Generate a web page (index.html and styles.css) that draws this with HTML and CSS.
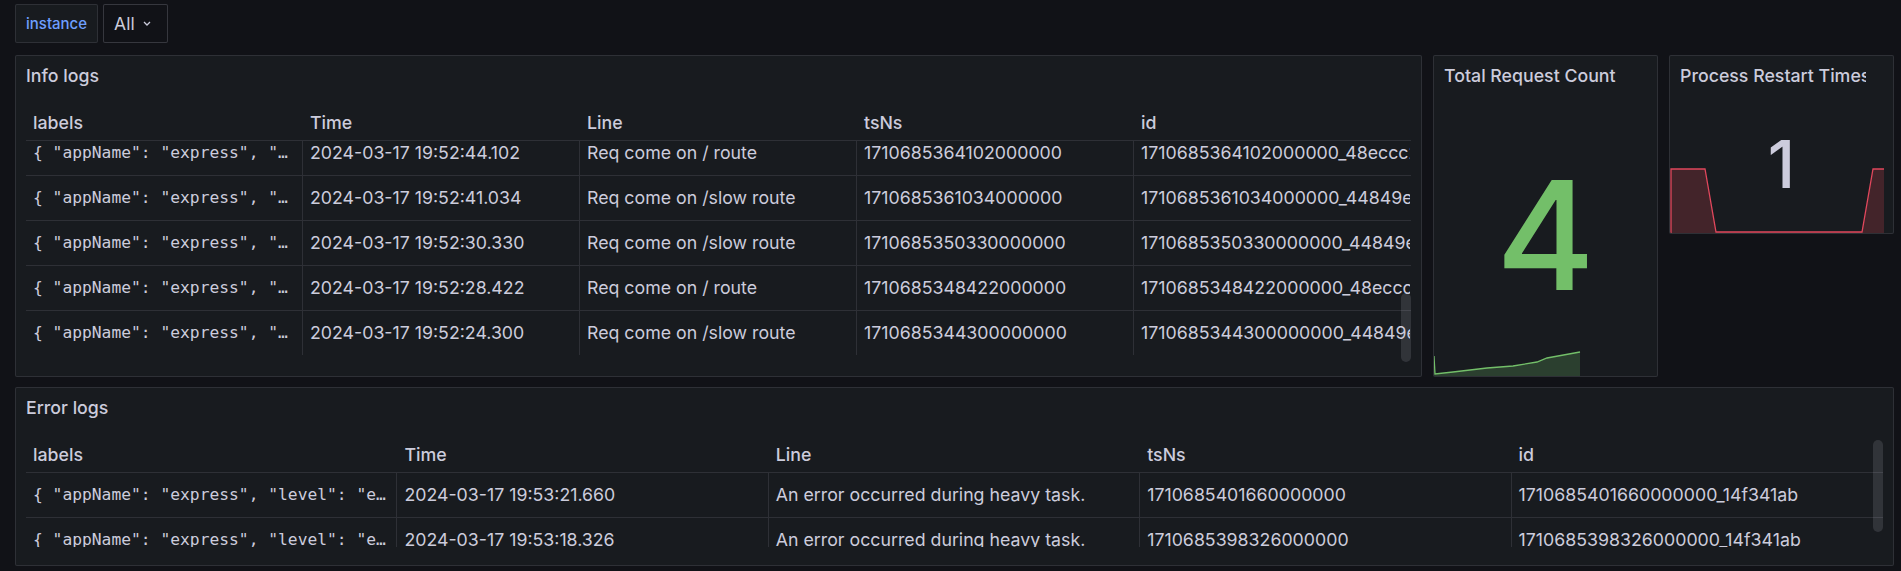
FILE: index.html
```html
<!DOCTYPE html>
<html lang="en">
<head>
<meta charset="utf-8">
<title>Dashboard</title>
<link rel="stylesheet" href="styles.css">
</head>
<body>
<div class="dashboard">
  <div class="vars">
    <label class="var-label">instance</label>
    <button class="var-select"><span>All</span>
      <svg class="chevron" width="8" height="5" viewBox="0 0 8 5"><path d="M1 1l3 3 3-3" /></svg>
    </button>
  </div>

  <div class="grid">
    <section class="panel panel--info">
      <header class="panel-header"><h2 class="panel-title">Info logs</h2></header>
      <div class="panel-body">
        <div class="table">
          <div class="table-row table-head">
            <div class="cell">labels</div><div class="cell">Time</div><div class="cell">Line</div><div class="cell">tsNs</div><div class="cell">id</div>
          </div>
          <div class="table-body">
            <div class="rows rows--scrolled">
              <div class="table-row">
                <div class="cell cell--json">{ "appName": "express", "level": "info", "service_name": "express" }</div>
                <div class="cell">2024-03-17 19:52:44.102</div>
                <div class="cell">Req come on / route</div>
                <div class="cell">1710685364102000000</div>
                <div class="cell">1710685364102000000_48eccc2d</div>
              </div>
              <div class="table-row">
                <div class="cell cell--json">{ "appName": "express", "level": "info", "service_name": "express" }</div>
                <div class="cell">2024-03-17 19:52:41.034</div>
                <div class="cell">Req come on /slow route</div>
                <div class="cell">1710685361034000000</div>
                <div class="cell">1710685361034000000_44849ea1</div>
              </div>
              <div class="table-row">
                <div class="cell cell--json">{ "appName": "express", "level": "info", "service_name": "express" }</div>
                <div class="cell">2024-03-17 19:52:30.330</div>
                <div class="cell">Req come on /slow route</div>
                <div class="cell">1710685350330000000</div>
                <div class="cell">1710685350330000000_44849ea1</div>
              </div>
              <div class="table-row">
                <div class="cell cell--json">{ "appName": "express", "level": "info", "service_name": "express" }</div>
                <div class="cell">2024-03-17 19:52:28.422</div>
                <div class="cell">Req come on / route</div>
                <div class="cell">1710685348422000000</div>
                <div class="cell">1710685348422000000_48eccc2d</div>
              </div>
              <div class="table-row">
                <div class="cell cell--json">{ "appName": "express", "level": "info", "service_name": "express" }</div>
                <div class="cell">2024-03-17 19:52:24.300</div>
                <div class="cell">Req come on /slow route</div>
                <div class="cell">1710685344300000000</div>
                <div class="cell">1710685344300000000_44849ea1</div>
              </div>
            </div>
          </div>
          <div class="scroll-thumb scroll-thumb--info"></div>
        </div>
      </div>
    </section>

    <section class="panel panel--stat">
      <header class="panel-header"><h2 class="panel-title">Total Request Count</h2></header>
      <div class="stat-body">
        <div class="stat-value stat-value--green">4</div>
      </div>
      <svg class="sparkline sparkline--green" width="223" height="30" viewBox="0 0 223 30">
        <polygon class="spark-fill" points="0,10 1,28 19,26 53,22 79,20 103,16 113,12 146,6 146,30 0,30" />
        <polyline class="spark-line" points="0,10 1,28 19,26 53,22 79,20 103,16 113,12 146,6" />
      </svg>
    </section>

    <section class="panel panel--stat panel--short">
      <header class="panel-header"><h2 class="panel-title">Process Restart Times</h2></header>
      <div class="stat-body">
        <div class="stat-value stat-value--text">1</div>
      </div>
      <svg class="sparkline sparkline--red" width="223" height="66" viewBox="0 0 223 66">
        <polygon class="spark-fill" points="1,2 35,2 46,65 192,65 203,2 214,2 214,66 1,66" />
        <polyline class="spark-line" points="1,66 1,2 35,2 46,65 192,65 203,2 214,2" />
      </svg>
    </section>

    <section class="panel panel--error">
      <header class="panel-header"><h2 class="panel-title">Error logs</h2></header>
      <div class="panel-body">
        <div class="table">
          <div class="table-row table-head">
            <div class="cell">labels</div><div class="cell">Time</div><div class="cell">Line</div><div class="cell">tsNs</div><div class="cell">id</div>
          </div>
          <div class="table-body table-body--short">
            <div class="rows">
              <div class="table-row">
                <div class="cell cell--json">{ "appName": "express", "level": "error", "service_name": "express" }</div>
                <div class="cell">2024-03-17 19:53:21.660</div>
                <div class="cell">An error occurred during heavy task.</div>
                <div class="cell">1710685401660000000</div>
                <div class="cell">1710685401660000000_14f341ab</div>
              </div>
              <div class="table-row">
                <div class="cell cell--json">{ "appName": "express", "level": "error", "service_name": "express" }</div>
                <div class="cell">2024-03-17 19:53:18.326</div>
                <div class="cell">An error occurred during heavy task.</div>
                <div class="cell">1710685398326000000</div>
                <div class="cell">1710685398326000000_14f341ab</div>
              </div>
            </div>
          </div>
          <div class="scroll-thumb scroll-thumb--error"></div>
        </div>
      </div>
    </section>
  </div>
</div>
</body>
</html>
```

FILE: styles.css
```css
* { box-sizing: border-box; }

html, body {
  margin: 0;
  height: 100%;
}

body {
  background: #111217;
  color: #ccccdc;
  font-family: Inter, "Noto Sans", sans-serif;
  font-size: 17.75px;
  overflow: hidden;
}

.dashboard {
  padding: 4px 7px 0 15px;
}

/* variables bar */
.vars {
  display: flex;
  gap: 5px;
  height: 39px;
  margin-bottom: 12px;
}

.var-label {
  display: flex;
  align-items: center;
  padding: 0 10px;
  background: #181b1f;
  border: 1px solid rgba(204, 204, 220, 0.12);
  border-radius: 2px;
  color: #6e9fff;
  font-size: 15px;
  font-weight: 500;
}

.var-select {
  display: flex;
  align-items: center;
  gap: 8px;
  padding: 0 16px 0 10px;
  background: #111217;
  border: 1px solid rgba(204, 204, 220, 0.2);
  border-radius: 2px;
  color: #ccccdc;
  font-family: inherit;
  font-size: 17.5px;
}

.chevron path {
  fill: none;
  stroke: #ccccdc;
  stroke-width: 1.3;
}

/* grid */
.grid {
  display: grid;
  grid-template-columns: minmax(0, 1fr) 225px 225px;
  grid-template-rows: 322px 179px;
  gap: 10px 11px;
}

.panel {
  position: relative;
  display: flex;
  flex-direction: column;
  min-width: 0;
  background: #181b1f;
  border: 1px solid rgba(204, 204, 220, 0.12);
  border-radius: 2px;
  overflow: hidden;
}

.panel--error { grid-column: 1 / -1; }
.panel--short { align-self: start; height: 179px; }

.panel-header {
  flex: none;
  height: 39px;
  display: flex;
  align-items: center;
  padding: 0 10px;
}

.panel--stat .panel-header { padding-right: 27px; }

.panel-title {
  margin: 0;
  font-size: 17.75px;
  font-weight: 500;
  white-space: nowrap;
  overflow: hidden;
}

.panel-body {
  flex: 1;
  min-height: 0;
  padding: 10px;
  display: flex;
  flex-direction: column;
}

/* table */
.table {
  position: relative;
  flex: 1;
  min-height: 0;
  display: flex;
  flex-direction: column;
}

.table-row {
  display: grid;
  grid-template-columns: repeat(5, minmax(0, 1fr));
}

.table-head {
  flex: none;
  height: 36px;
  border-bottom: 1px solid rgba(204, 204, 220, 0.12);
  font-weight: 500;
}

.cell {
  padding: 0 7px;
  overflow: hidden;
  white-space: nowrap;
  text-overflow: clip;
  border-right: 1px solid rgba(204, 204, 220, 0.12);
  line-height: 44px;
}

.cell:last-child { border-right-color: transparent; }

.table-head .cell {
  line-height: 35px;
  border-right-color: transparent;
}

.cell--json {
  font-family: "DejaVu Sans Mono", monospace;
  font-size: 16.3px;
  text-overflow: ellipsis;
}

.table-body {
  flex: 1;
  min-height: 0;
  overflow: hidden;
}

.table-body--short {
  flex: none;
  height: 74px;
}

.table-body .table-row {
  height: 45px;
  border-bottom: 1px solid rgba(204, 204, 220, 0.12);
}

.table-body .table-row:last-child { border-bottom-color: transparent; }

.rows--scrolled { margin-top: -10px; }

.scroll-thumb {
  position: absolute;
  right: 0;
  width: 10px;
  border-radius: 5px;
  background: rgba(204, 204, 220, 0.14);
}

.scroll-thumb--info { top: 188px; height: 69px; }
.scroll-thumb--error { top: 3px; height: 92px; }

/* stat */
.stat-body {
  flex: 1;
  display: flex;
  align-items: center;
  justify-content: center;
}

.stat-value {
  position: relative;
  z-index: 1;
  line-height: 1;
  font-weight: 500;
}

.stat-value--green {
  color: #73bf69;
  font-size: 151px;
}

.stat-value--text {
  color: #ccccdc;
  font-size: 66px;
}

.sparkline {
  position: absolute;
  left: 0;
  bottom: 0;
}

.spark-line {
  fill: none;
  stroke-width: 1.3;
}

.sparkline--green .spark-fill { fill: rgba(115, 191, 105, 0.22); }
.sparkline--green .spark-line { stroke: #73bf69; }
.sparkline--red .spark-fill { fill: rgba(242, 73, 92, 0.2); }
.sparkline--red .spark-line { stroke: #e0475c; }
```
